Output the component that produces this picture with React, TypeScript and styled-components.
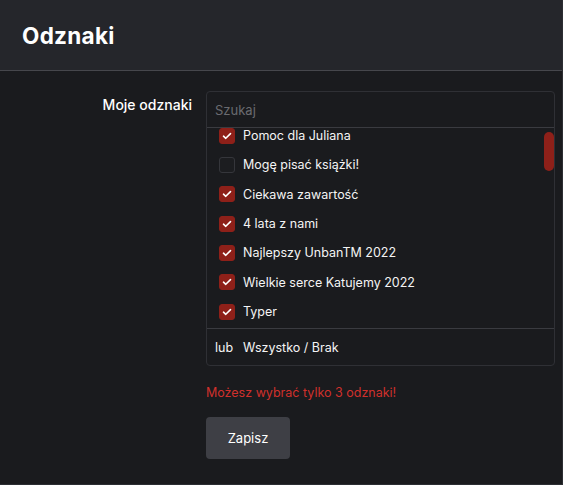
import React, { useLayoutEffect, useRef, useState } from "react";
import styled, { createGlobalStyle } from "styled-components";

const GlobalStyle = createGlobalStyle`
  html, body {
    margin: 0;
    padding: 0;
    background: #1a1b1e;
  }
  body {
    font-family: Inter, "Noto Sans", sans-serif;
    color: #f1f1f1;
  }
`;

const Panel = styled.div`
  width: 563px;
  height: 485px;
  box-sizing: border-box;
  background: #1a1b1e;
  border-right: 1px solid #2c2e33;
  border-bottom: 1px solid #2c2e33;
  display: flex;
  flex-direction: column;
`;

const Header = styled.header`
  height: 70px;
  flex-shrink: 0;
  background: #25262b;
  border-bottom: 1px solid #46474c;
  display: flex;
  align-items: center;
  padding: 0 22px;
`;

const Title = styled.h1`
  margin: 0;
  font-size: 22.5px;
  font-weight: 700;
  color: #ffffff;
  letter-spacing: 0.3px;
`;

const Body = styled.div`
  display: grid;
  grid-template-columns: 196px 349px;
  column-gap: 10px;
  padding: 20px 0 0 0;
`;

const Label = styled.label`
  justify-self: end;
  padding-top: 5px;
  padding-right: 4px;
  font-size: 14px;
  font-weight: 500;
  color: #ffffff;
`;

const Field = styled.div`
  display: flex;
  flex-direction: column;
`;

const Box = styled.div`
  box-sizing: border-box;
  height: 275px;
  border: 1px solid #2f3035;
  border-radius: 4px;
  display: flex;
  flex-direction: column;
  overflow: hidden;
`;

const Search = styled.input`
  height: 36px;
  flex-shrink: 0;
  box-sizing: border-box;
  background: transparent;
  border: none;
  border-bottom: 1px solid #3a3b40;
  padding: 0 8px;
  font-family: inherit;
  font-size: 13px;
  color: #e9e9e9;
  outline: none;
  &::placeholder {
    color: #6a6b70;
  }
`;

const ListWrap = styled.div`
  position: relative;
  flex: 1;
  min-height: 0;
  display: flex;
`;

const List = styled.ul`
  flex: 1;
  margin: 0;
  padding: 8px 0 8px 0;
  list-style: none;
  overflow-y: scroll;
  scrollbar-width: none;
  &::-webkit-scrollbar {
    display: none;
  }
`;

const Thumb = styled.div`
  position: absolute;
  right: 0;
  width: 10px;
  border-radius: 5px;
  background: #8e2019;
`;

const Item = styled.li`
  height: 29.33px;
  display: flex;
  align-items: center;
  gap: 8px;
  padding-left: 12px;
  font-size: 12.5px;
  color: #f4f4f4;
`;

const Check = styled.span<{ $on: boolean }>`
  width: 16px;
  height: 16px;
  box-sizing: border-box;
  border-radius: 3px;
  display: flex;
  align-items: center;
  justify-content: center;
  background: ${(p) => (p.$on ? "#8e2019" : "#1c1d20")};
  border: 1px solid ${(p) => (p.$on ? "#8e2019" : "#35363b")};
`;

const Footer = styled.div`
  height: 36px;
  flex-shrink: 0;
  border-top: 1px solid #3a3b40;
  display: flex;
  align-items: center;
  gap: 10px;
  padding-left: 8px;
  font-size: 12.5px;
  color: #f4f4f4;
`;

const ErrorText = styled.p`
  margin: 19px 0 0 0;
  font-size: 12.5px;
  color: #d0302c;
`;

const SaveButton = styled.button`
  margin-top: 17px;
  width: 84px;
  height: 42px;
  border: none;
  border-radius: 4px;
  background: #3e3f45;
  color: #ffffff;
  font-family: inherit;
  font-size: 13px;
`;

const badges: [string, boolean][] = [
  ["Pomoc dla Juliana", true],
  ["Mogę pisać książki!", false],
  ["Ciekawa zawartość", true],
  ["4 lata z nami", true],
  ["Najlepszy UnbanTM 2022", true],
  ["Wielkie serce Katujemy 2022", true],
  ["Typer", true],
  ["Aktywny użytkownik", false],
  ["Weteran forum", false],
  ["Pomocna dłoń", false],
  ["Twórca poradników", false],
  ["Łowca błędów", false],
  ["5 lat z nami", false],
  ["Najlepszy UnbanTM 2021", false],
  ["Wielkie serce Katujemy 2021", false],
  ["Turniej 2022", false],
  ["Konkurs świąteczny", false],
  ["Grafik", false],
  ["Muzyk", false],
  ["Recenzent", false],
  ["Streamer", false],
  ["Moderator roku", false],
  ["Zasłużony", false],
  ["Pierwszy post", false],
  ["100 postów", false],
  ["500 postów", false],
  ["1000 postów", false],
  ["Darczyńca", false],
  ["Tłumacz", false],
  ["Beta tester", false],
  ["Organizator", false],
  ["Ambasador", false],
  ["Legenda", false],
  ["3 lata z nami", false],
];

const Tick = () => (
  <svg width="10" height="8" viewBox="0 0 10 8" fill="none">
    <path d="M1.5 4.2 L3.8 6.3 L8.5 1.6" stroke="#fff" strokeWidth="1.6" strokeLinecap="round" strokeLinejoin="round" />
  </svg>
);

const BadgePicker = () => {
  const [items, setItems] = useState(badges);
  const [bar, setBar] = useState({ top: 3, height: 39 });
  const listRef = useRef<HTMLUListElement>(null);

  const measure = () => {
    const el = listRef.current;
    if (!el) return;
    const ratio = el.clientHeight / el.scrollHeight;
    const height = Math.max(20, el.clientHeight * ratio);
    const top = 1 + (el.scrollTop / el.scrollHeight) * el.clientHeight;
    setBar({ top, height });
  };

  useLayoutEffect(() => {
    if (listRef.current) listRef.current.scrollTop = 15;
    measure();
  }, []);

  const toggle = (i: number) =>
    setItems((prev) => prev.map((b, j) => (j === i ? [b[0], !b[1]] : b)));

  return (
    <Box>
      <Search placeholder="Szukaj" />
      <ListWrap>
        <List ref={listRef} onScroll={measure}>
          {items.map(([name, on], i) => (
            <Item key={name} onClick={() => toggle(i)}>
              <Check $on={on}>{on && <Tick />}</Check>
              {name}
            </Item>
          ))}
        </List>
        <Thumb style={{ top: bar.top, height: bar.height }} />
      </ListWrap>
      <Footer>
        <span>lub</span>
        <span>Wszystko / Brak</span>
      </Footer>
    </Box>
  );
};

const App = () => (
  <>
    <GlobalStyle />
    <Panel>
      <Header>
        <Title>Odznaki</Title>
      </Header>
      <Body>
        <Label>Moje odznaki</Label>
        <Field>
          <BadgePicker />
          <ErrorText>Możesz wybrać tylko 3 odznaki!</ErrorText>
          <div>
            <SaveButton>Zapisz</SaveButton>
          </div>
        </Field>
      </Body>
    </Panel>
  </>
);

export default App;
